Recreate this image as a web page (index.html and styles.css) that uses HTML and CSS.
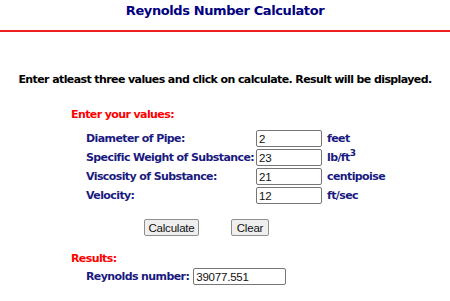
FILE: index.html
```html
<!DOCTYPE html>
<html lang="en">
<head>
  <meta charset="UTF-8">
  <title>Reynolds Number Calculator</title>
  <link rel="stylesheet" href="styles.css">
</head>
<body>

  <h1 class="title">Reynolds Number Calculator</h1>

  <p class="intro">Enter atleast three values and click on calculate. Result will be displayed.</p>

  <section class="calc">
    <div class="heading">Enter your values:</div>

    <div class="fields">
      <label>Diameter of Pipe:</label>
      <input type="text" id="diameter" value="2">
      <span class="unit">feet</span>

      <label>Specific Weight of Substance:</label>
      <input type="text" id="weight" value="23">
      <span class="unit">lb/ft<sup>3</sup></span>

      <label>Viscosity of Substance:</label>
      <input type="text" id="viscosity" value="21">
      <span class="unit">centipoise</span>

      <label>Velocity:</label>
      <input type="text" id="velocity" value="12">
      <span class="unit">ft/sec</span>
    </div>

    <div class="buttons">
      <button class="calc-btn" onclick="calculate()">Calculate</button>
      <button class="clear-btn" onclick="clearAll()">Clear</button>
    </div>

    <div class="heading results">Results:</div>
    <div class="result">
      <label>Reynolds number:</label>
      <input type="text" id="reynolds" value="39077.551">
    </div>
  </section>

  <script>
    const ids = ['diameter', 'weight', 'viscosity', 'velocity'];

    function calculate() {
      const [d, w, mu, v] = ids.map(id => parseFloat(document.getElementById(id).value));
      // density in slug/ft3 from specific weight, viscosity from centipoise
      const rho = w / 32.174;
      const muLb = mu * 0.000020885;
      const re = rho * v * d / muLb;
      document.getElementById('reynolds').value = isFinite(re) ? re.toFixed(3) : '';
    }

    function clearAll() {
      ids.concat('reynolds').forEach(id => document.getElementById(id).value = '');
    }
  </script>
</body>
</html>
```

FILE: styles.css
```css
body {
  margin: 0;
  font-family: "DejaVu Sans", Verdana, sans-serif;
  font-size: 11px;
  font-weight: bold;
  letter-spacing: -0.6px;
  line-height: 13px;
  background: #fff;
  color: #000;
}

.title {
  margin: 0;
  padding: 2px 0 11px;
  font-size: 13px;
  line-height: 17px;
  letter-spacing: -0.4px;
  color: #000080;
  text-align: center;
  border-bottom: 2px solid #f02020;
}

.intro {
  margin: 41px 0 0;
  text-align: center;
}

.calc {
  margin: 22px 0 0 71px;
}

.heading {
  color: #ff0000;
}

.fields {
  display: grid;
  grid-template-columns: 170px 71px auto;
  row-gap: 2px;
  align-items: center;
  margin: 9px 0 0 15px;
  color: #1a1a80;
}

.fields input, .result input {
  font-family: "Liberation Sans", Arial, sans-serif;
  font-size: 11.5px;
  font-weight: normal;
  letter-spacing: -0.2px;
  color: #111;
  border: 1px solid #767676;
  border-radius: 2px;
  padding: 0 2px;
  height: 17px;
  box-sizing: border-box;
}

.fields input {
  width: 66px;
}

.unit sup {
  font-size: 9px;
  line-height: 0;
}

.buttons {
  display: flex;
  margin: 15px 0 0 73px;
}

.buttons button {
  font-family: "Liberation Sans", Arial, sans-serif;
  font-size: 11.5px;
  font-weight: normal;
  letter-spacing: -0.2px;
  color: #111;
  padding: 0;
  height: 17px;
  background: #efefef;
  border: 1px solid #8f8f8f;
  border-radius: 2px;
}

.calc-btn {
  width: 55px;
}

.clear-btn {
  width: 38px;
  margin-left: 32px;
}

.results {
  margin-top: 16px;
}

.result {
  display: flex;
  align-items: center;
  gap: 4px;
  margin: 3px 0 0 15px;
  color: #1a1a80;
}

.result input {
  width: 93px;
}
```
